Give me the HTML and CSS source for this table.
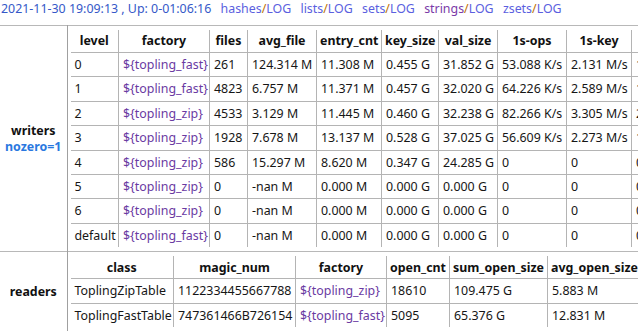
FILE: index.html
```html
<!DOCTYPE html>
<html>
<head>
<meta charset="utf-8">
<link rel="stylesheet" href="styles.css">
</head>
<body>
<div class="top">
  <span class="time">2021-11-30 19:09:13 , Up: 0-01:06:16</span>
  <span class="log"><a class="lk">hashes</a><span class="sl">/</span><a class="lk">LOG</a></span>
  <span class="log"><a class="lk">lists</a><span class="sl">/</span><a class="lk">LOG</a></span>
  <span class="log"><a class="lk">sets</a><span class="sl">/</span><a class="lk">LOG</a></span>
  <span class="log"><a class="lk visited">strings</a><span class="sl">/</span><a class="lk">LOG</a></span>
  <span class="log"><a class="lk">zsets</a><span class="sl">/</span><a class="lk">LOG</a></span>
</div>
<table class="outer">
  <tr>
    <th class="label">writers<br><a class="nz">nozero=1</a></th>
    <td class="holder">
      <table class="grid writers">
        <tr><th>level</th><th>factory</th><th>files</th><th>avg_file</th><th>entry_cnt</th><th>key_size</th><th>val_size</th><th>1s-ops</th><th>1s-key</th><th>1s-val</th></tr>
        <tr><td>0</td><td class="fac">${topling_fast}</td><td>261</td><td>124.314 M</td><td>11.308 M</td><td>0.455 G</td><td>31.852 G</td><td>53.088 K/s</td><td>2.131 M/s</td><td>1.198 G/s</td></tr>
        <tr><td>1</td><td class="fac">${topling_fast}</td><td>4823</td><td>6.757 M</td><td>11.371 M</td><td>0.457 G</td><td>32.020 G</td><td>64.226 K/s</td><td>2.589 M/s</td><td>1.456 G/s</td></tr>
        <tr><td>2</td><td class="fac">${topling_zip}</td><td>4533</td><td>3.129 M</td><td>11.445 M</td><td>0.460 G</td><td>32.238 G</td><td>82.266 K/s</td><td>3.305 M/s</td><td>2.031 G/s</td></tr>
        <tr><td>3</td><td class="fac">${topling_zip}</td><td>1928</td><td>7.678 M</td><td>13.137 M</td><td>0.528 G</td><td>37.025 G</td><td>56.609 K/s</td><td>2.273 M/s</td><td>1.602 G/s</td></tr>
        <tr><td>4</td><td class="fac">${topling_zip}</td><td>586</td><td>15.297 M</td><td>8.620 M</td><td>0.347 G</td><td>24.285 G</td><td>0</td><td>0</td><td>0</td></tr>
        <tr><td>5</td><td class="fac">${topling_zip}</td><td>0</td><td>-nan M</td><td>0.000 M</td><td>0.000 G</td><td>0.000 G</td><td>0</td><td>0</td><td>0</td></tr>
        <tr><td>6</td><td class="fac">${topling_zip}</td><td>0</td><td>-nan M</td><td>0.000 M</td><td>0.000 G</td><td>0.000 G</td><td>0</td><td>0</td><td>0</td></tr>
        <tr><td>default</td><td class="fac">${topling_fast}</td><td>0</td><td>-nan M</td><td>0.000 M</td><td>0.000 G</td><td>0.000 G</td><td>0</td><td>0</td><td>0</td></tr>
      </table>
    </td>
  </tr>
  <tr>
    <th class="label">readers</th>
    <td class="holder">
      <table class="grid readers">
        <tr><th>class</th><th>magic_num</th><th>factory</th><th>open_cnt</th><th>sum_open_size</th><th>avg_open_size</th></tr>
        <tr><td>ToplingZipTable</td><td>1122334455667788</td><td class="fac">${topling_zip}</td><td>18610</td><td>109.475 G</td><td>5.883 M</td></tr>
        <tr><td>ToplingFastTable</td><td>747361466B726154</td><td class="fac">${topling_fast}</td><td>5095</td><td>65.376 G</td><td>12.831 M</td></tr>
      </table>
    </td>
  </tr>
</table>
</body>
</html>
```
FILE: styles.css
```css
html { overflow: hidden; }
body {
  margin: 0;
  font-family: "Noto Sans", "Open Sans", sans-serif;
  font-size: 12.4px;
  color: #161616;
  background: #fff;
}
.top {
  height: 25px;
  line-height: 17px;
  margin-top: 0;
  white-space: nowrap;
  padding-left: 1px;
  overflow: hidden;
}
.time { color: #3558c8; margin-right: 6px; }
.log { margin-right: 6px; }
.lk { color: #5b5fe0; }
.lk.visited { color: #7a3aa8; }
.sl { color: #c07000; }

.outer {
  border-collapse: collapse;
}
.outer > tbody > tr > th,
.outer > tbody > tr > td {
  border-top: 1px solid #b8b8b8;
  padding: 4px 0 4px 3px;
}
.outer th.label {
  box-sizing: border-box;
  width: 67px;
  min-width: 67px;
  padding: 0;
  border-right: 1px solid #a0a0a0;
  text-align: center;
  vertical-align: middle;
  color: #111;
  line-height: 16px;
}
.nz { color: #2a78e0; }

.grid {
  border-collapse: collapse;
  border-style: hidden;
  table-layout: fixed;
  white-space: nowrap;
}
.grid th, .grid td {
  box-sizing: border-box;
  border: 1px solid #b4b4b4;
  overflow: hidden;
  line-height: 15.4px;
}
.grid th {
  padding: 3.3px 3px;
  color: #111;
  text-align: center;
}
.grid td {
  padding: 4px 3px 4px 4px;
  text-align: left;
}
.fac { color: #6a3aa2; }

.writers { width: 641px; }
.writers th:nth-child(1) { width: 48px; }
.writers th:nth-child(2) { width: 91px; }
.writers th:nth-child(3) { width: 38px; }
.writers th:nth-child(4) { width: 69px; }
.writers th:nth-child(5) { width: 65px; }
.writers th:nth-child(6) { width: 57px; }
.writers th:nth-child(7) { width: 59px; }
.writers th:nth-child(8) { width: 69px; }
.writers th:nth-child(9) { width: 65px; }
.writers th:nth-child(10) { width: 80px; }

.readers { width: 567px; }
.readers th:nth-child(1) { width: 103px; }
.readers th:nth-child(2) { width: 122px; }
.readers th:nth-child(3) { width: 91px; }
.readers th:nth-child(4) { width: 63px; }
.readers th:nth-child(5) { width: 98px; }
.readers th:nth-child(6) { width: 90px; }
```
